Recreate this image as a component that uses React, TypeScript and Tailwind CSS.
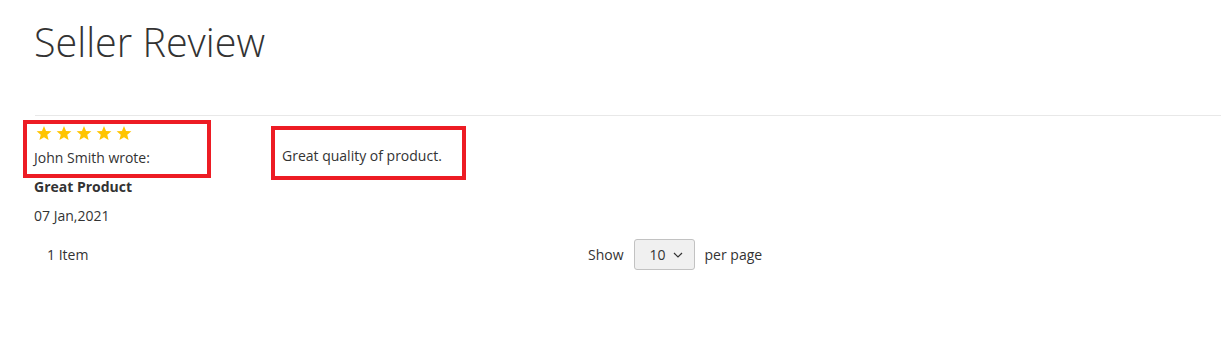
import React from 'react';

const Star: React.FC = () => (
  <svg width="16" height="15" viewBox="0 0 24 23" fill="#ffc400">
    <path d="M12 0l3.1 7.6 8.2.6-6.3 5.3 2 8-7-4.3-7 4.3 2-8L.7 8.2l8.2-.6z" />
  </svg>
);

const App: React.FC = () => {
  return (
    <div className="min-h-screen bg-white font-['Open_Sans',sans-serif] text-[#333333]">
      <h1 className="pl-[34px] pt-[14px] text-[39.5px] font-light leading-[56px]">Seller Review</h1>
      <div className="ml-[35px] mt-[45px] border-t border-[#e8e8e8]" />

      {/* review row */}
      <div className="relative flex pl-[34px]">
        <div className="w-[248px]">
          <div className="mt-[10px] ml-[2px] flex h-[15px] gap-[4px]">
            <Star />
            <Star />
            <Star />
            <Star />
            <Star />
          </div>
          <p className="mt-[7px] text-[14px] leading-[20px]">John Smith wrote:</p>
          <p className="mt-[9px] text-[14px] font-bold leading-[20px]">Great Product</p>
          <p className="mt-[9px] text-[14px] leading-[20px]">07 Jan,2021</p>
        </div>
        <div className="pt-[30px]">
          <p className="text-[14px] leading-[20px]">Great quality of product.</p>
        </div>

        {/* highlight boxes */}
        <div className="pointer-events-none absolute left-[23px] top-[4px] h-[58px] w-[188px] border-4 border-[#ed1c24]" />
        <div className="pointer-events-none absolute left-[271px] top-[10px] h-[54px] w-[195px] border-4 border-[#ed1c24]" />
      </div>

      {/* toolbar */}
      <div className="mt-[13px] flex items-center text-[14px] leading-[20px]">
        <div className="w-[588px] pl-[47px]">1 Item</div>
        <div className="flex items-center gap-[10px]">
          <span>Show</span>
          <div className="flex h-[31px] w-[61px] items-center rounded-[3px] border border-[#c2c2c2] bg-[#f0f0f0] pl-[15px]">
            <span>10</span>
            <svg className="ml-[7px]" width="10" height="6" viewBox="0 0 10 6" fill="none" stroke="#333" strokeWidth="1.2">
              <path d="M1 1l4 4 4-4" />
            </svg>
          </div>
          <span>per page</span>
        </div>
      </div>
    </div>
  );
};

export default App;
